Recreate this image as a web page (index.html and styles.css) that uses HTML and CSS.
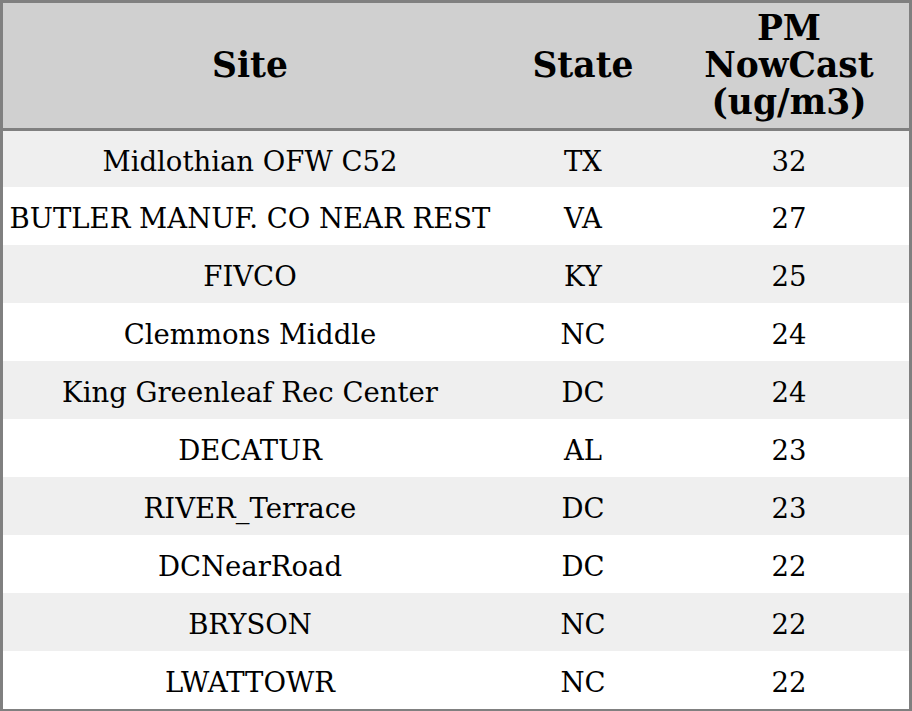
FILE: index.html
```html
<!DOCTYPE html>
<html>
<head>
<meta charset="utf-8">
<link rel="stylesheet" href="styles.css">
</head>
<body>
<table class="data">
  <colgroup>
    <col class="c-site">
    <col class="c-state">
    <col class="c-pm">
  </colgroup>
  <thead>
    <tr>
      <th>Site</th>
      <th>State</th>
      <th>PM<br>NowCast<br>(ug/m3)</th>
    </tr>
  </thead>
  <tbody>
    <tr><td>Midlothian OFW C52</td><td>TX</td><td>32</td></tr>
    <tr><td>BUTLER MANUF. CO NEAR REST</td><td>VA</td><td>27</td></tr>
    <tr><td>FIVCO</td><td>KY</td><td>25</td></tr>
    <tr><td>Clemmons Middle</td><td>NC</td><td>24</td></tr>
    <tr><td>King Greenleaf Rec Center</td><td>DC</td><td>24</td></tr>
    <tr><td>DECATUR</td><td>AL</td><td>23</td></tr>
    <tr><td>RIVER_Terrace</td><td>DC</td><td>23</td></tr>
    <tr><td>DCNearRoad</td><td>DC</td><td>22</td></tr>
    <tr><td>BRYSON</td><td>NC</td><td>22</td></tr>
    <tr><td>LWATTOWR</td><td>NC</td><td>22</td></tr>
  </tbody>
</table>
</body>
</html>
```
FILE: styles.css
```css
html, body {
  margin: 0;
  padding: 0;
  background: #ffffff;
}
.data {
  width: 912px;
  table-layout: fixed;
  border-collapse: separate;
  border-spacing: 0;
  border: 3px solid #808080;
  font-family: "DejaVu Serif", serif;
  color: #000;
}
.c-site { width: 494px; }
.c-state { width: 172px; }
.c-pm { width: 240px; }
.data th {
  background: #d0d0d0;
  font-size: 34.5px;
  font-weight: bold;
  line-height: 37px;
  padding: 0 0 1px;
  text-align: center;
  vertical-align: middle;
  border-bottom: 3px solid #808080;
  box-sizing: border-box;
}
.data thead th { height: 128px; }
.data td {
  font-size: 27.5px;
  line-height: 32px;
  height: 58px;
  padding: 4px 0 0;
  box-sizing: border-box;
  text-align: center;
  vertical-align: middle;
  white-space: nowrap;
}
.data tbody tr:first-child td { height: 56px; }
.data tbody tr:nth-child(odd) td { background: #efefef; }
.data tbody tr:nth-child(even) td { background: #ffffff; }
```
